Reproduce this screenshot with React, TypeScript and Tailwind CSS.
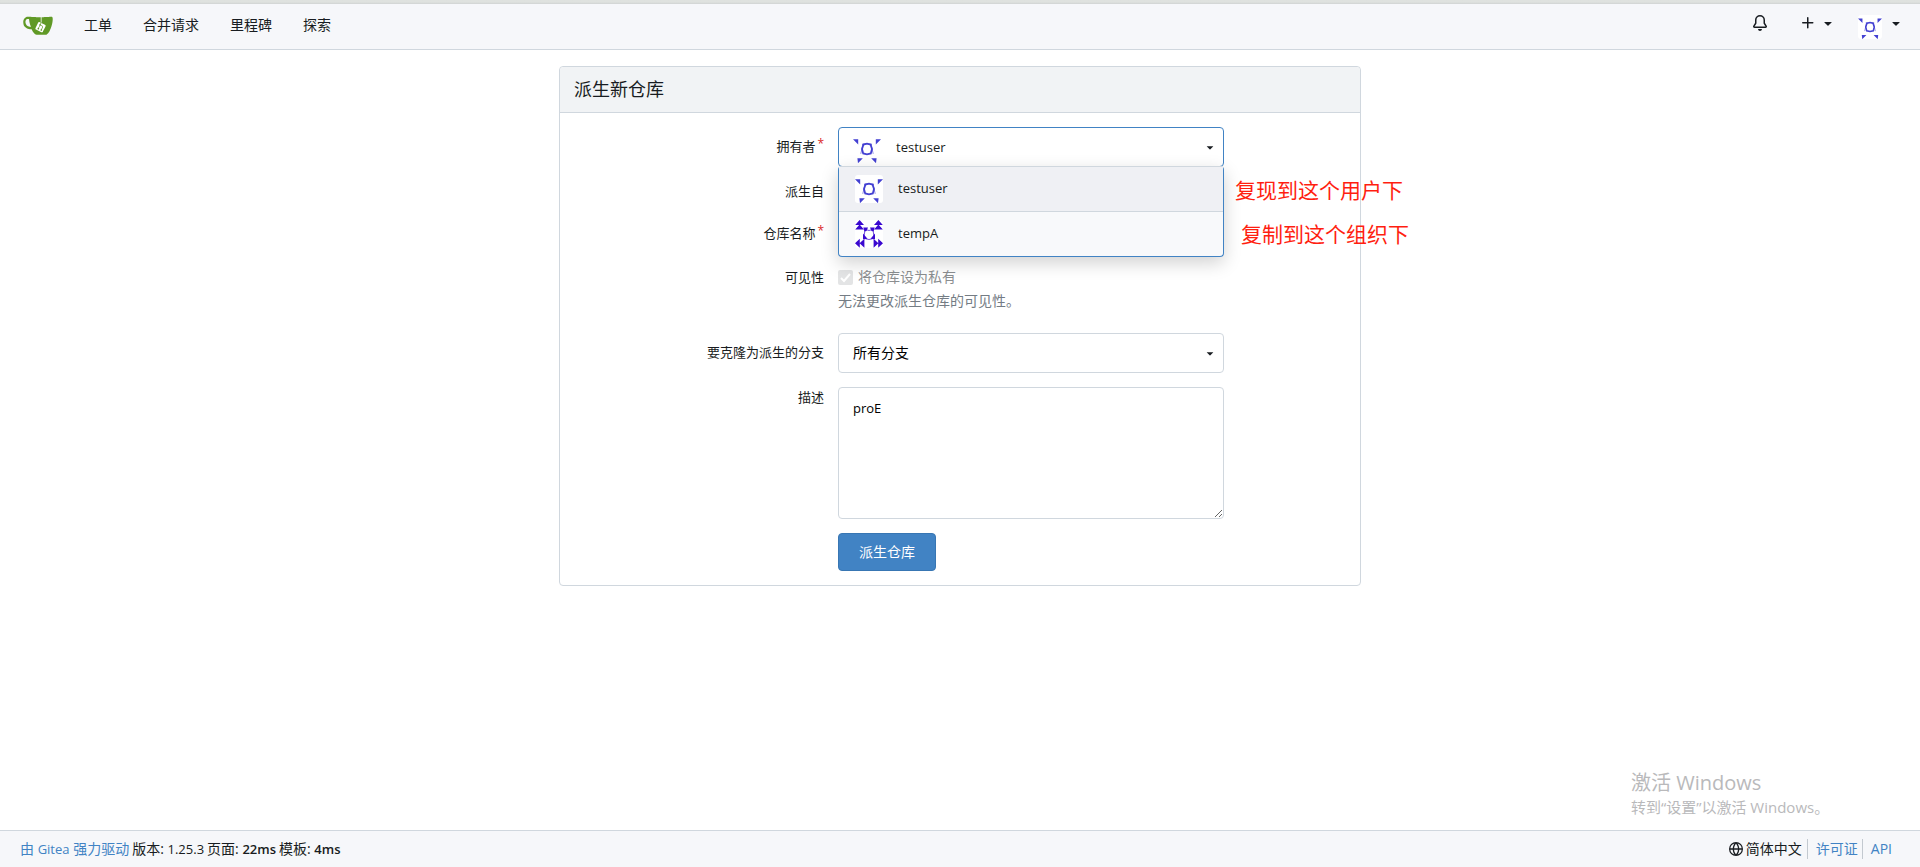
import { useState } from "react";
import type { ReactNode } from "react";

const OCTICONS = {
  bell: "M8 16a2 2 0 0 0 1.985-1.75c.017-.137-.097-.25-.235-.25h-3.5c-.138 0-.252.113-.235.25A2 2 0 0 0 8 16ZM3 5a5 5 0 0 1 10 0v2.947c0 .05.015.098.042.139l1.703 2.555A1.519 1.519 0 0 1 13.482 13H2.518a1.516 1.516 0 0 1-1.263-2.36l1.703-2.554A.255.255 0 0 0 3 7.947Zm5-3.5A3.5 3.5 0 0 0 4.5 5v2.947c0 .346-.102.683-.294.97l-1.703 2.556a.017.017 0 0 0-.003.01l.001.006c0 .002.002.004.004.006l.006.004.007.001h10.964l.007-.001.006-.004.004-.006.001-.007a.017.017 0 0 0-.003-.01l-1.703-2.554a1.745 1.745 0 0 1-.294-.97V5A3.5 3.5 0 0 0 8 1.5Z",
  plus: "M7.75 2a.75.75 0 0 1 .75.75V7h4.25a.75.75 0 0 1 0 1.5H8.5v4.25a.75.75 0 0 1-1.5 0V8.5H2.75a.75.75 0 0 1 0-1.5H7V2.75A.75.75 0 0 1 7.75 2Z",
  globe:
    "M8 0a8 8 0 1 1 0 16A8 8 0 0 1 8 0ZM5.78 8.75a9.64 9.64 0 0 0 1.363 4.177c.255.426.542.832.857 1.215.245-.296.551-.705.857-1.215A9.64 9.64 0 0 0 10.22 8.75Zm4.44-1.5a9.64 9.64 0 0 0-1.363-4.177c-.307-.51-.612-.919-.857-1.215a9.927 9.927 0 0 0-.857 1.215A9.64 9.64 0 0 0 5.78 7.25Zm-5.944 1.5H1.543a6.507 6.507 0 0 0 4.666 5.5c-.123-.181-.24-.365-.352-.552-.715-1.192-1.437-2.874-1.581-4.948Zm-2.733-1.5h2.733c.144-2.074.866-3.756 1.58-4.948.12-.197.237-.381.353-.552a6.507 6.507 0 0 0-4.666 5.5Zm10.181 1.5c-.144 2.074-.866 3.756-1.58 4.948-.12.197-.237.381-.353.552a6.507 6.507 0 0 0 4.666-5.5Zm2.733-1.5a6.507 6.507 0 0 0-4.666-5.5c.123.181.24.365.353.552.714 1.192 1.436 2.874 1.58 4.948Z",
  caret:
    "m4.427 7.427 3.396 3.396a.25.25 0 0 0 .354 0l3.396-3.396A.25.25 0 0 0 11.396 7H4.604a.25.25 0 0 0-.177.427Z",
};

function Octicon({ name, className = "size-4" }: { name: keyof typeof OCTICONS; className?: string }) {
  return (
    <svg viewBox="0 0 16 16" className={`shrink-0 ${className}`} fill="currentColor" aria-hidden="true">
      <path d={OCTICONS[name]} />
    </svg>
  );
}

function GiteaLogo() {
  return (
    <svg viewBox="0 0 640 640" className="size-[30px]" aria-hidden="true">
      <path
        fill="#fff"
        d="M395.9,484.2l-126.9-61c-12.5-6-17.9-21.2-11.8-33.8l61-126.9c6-12.5,21.2-17.9,33.8-11.8c17.2,8.3,27.1,13,27.1,13l-0.1-109.2l16.7-0.1l0.1,117.1c0,0,57.4,24.2,83.1,40.1c3.7,2.3,10.2,6.8,12.9,14.4c2.1,6.1,2,13.1-1,19.3l-61,126.9C423.6,484.9,408.4,490.3,395.9,484.2z"
      />
      <path
        fill="#609926"
        d="M622.7,149.8c-4.1-4.1-9.6-4-9.6-4s-117.2,6.6-177.9,8c-13.3,0.3-26.5,0.6-39.6,0.7c0,39.1,0,78.2,0,117.2c-5.5-2.6-11.1-5.3-16.6-7.9c0-36.4-0.1-109.2-0.1-109.2c-29,0.4-89.2-2.2-89.2-2.2s-141.4-7.1-156.8-8.5c-9.8-0.6-22.5-2.1-39,1.5c-8.7,1.8-33.5,7.4-53.8,26.9C-4.9,212.4,6.6,276.2,8,285.8c1.7,11.7,6.9,44.2,31.7,72.5c45.8,56.1,144.4,54.8,144.4,54.8s12.1,28.9,30.6,55.5c25,33.1,50.7,58.9,75.7,62c63,0,188.9-0.1,188.9-0.1s12,0.1,28.3-10.3c14-8.5,26.5-23.4,26.5-23.4s12.9-13.8,30.9-45.3c5.5-9.7,10.1-19.1,14.1-28c0,0,55.2-117.1,55.2-231.1C633.2,157.9,624.7,151.8,622.7,149.8z M125.6,353.9c-25.9-8.5-36.9-18.7-36.9-18.7S69.6,321.8,60,295.4c-16.5-44.2-1.4-71.2-1.4-71.2s8.4-22.5,38.5-30c13.8-3.7,31-3.1,31-3.1s7.1,59.4,15.7,94.2c7.2,29.2,24.8,77.7,24.8,77.7S142.5,359.9,125.6,353.9z M425.9,461.5c0,0-6.1,14.5-19.6,15.4c-5.8,0.4-10.3-1.2-10.3-1.2s-0.3-0.1-5.3-2.1l-112.9-55c0,0-10.9-5.7-12.8-15.6c-2.2-8.1,2.7-18.1,2.7-18.1L322,273c0,0,4.8-9.7,12.2-13c0.6-0.3,2.3-1,4.5-1.5c8.1-2.1,18,2.8,18,2.8l110.7,53.7c0,0,12.6,5.7,15.3,16.2c1.9,7.4-0.5,14-1.8,17.2C474.6,363.8,425.9,461.5,425.9,461.5z"
      />
      <path
        fill="#609926"
        d="M326.8,380.1c-8.2,0.1-15.4,5.8-17.3,13.8c-1.9,8,2,16.3,9.1,20c7.7,4,17.5,1.8,22.7-5.4c5.1-7.1,4.3-16.9-1.8-23.1l24-49.1c1.5,0.1,3.7,0.2,6.2-0.5c4.1-0.9,7.1-3.6,7.1-3.6c4.2,1.8,8.6,3.8,13.2,6.1c4.8,2.4,9.3,4.9,13.4,7.3c0.9,0.5,1.8,1.1,2.8,1.9c1.6,1.3,3.4,3.1,4.7,5.5c1.9,5.5-1.9,14.9-1.9,14.9c-2.3,7.6-18.4,40.6-18.4,40.6c-8.1-0.2-15.3,5-17.7,12.5c-2.6,8.1,1.1,17.3,8.9,21.3c7.8,4,17.4,1.7,22.5-5.3c5-6.8,4.6-16.3-1.1-22.6c1.9-3.7,3.7-7.4,5.6-11.3c5-10.4,13.5-30.4,13.5-30.4c0.9-1.7,5.7-10.3,2.7-21.3c-2.5-11.4-12.6-16.7-12.6-16.7c-12.2-7.9-29.2-15.2-29.2-15.2s0-4.1-1.1-7.1c-1.1-3.1-2.8-5.1-3.9-6.3c4.7-9.7,9.4-19.3,14.1-29c-4.1-2-8.1-4-12.2-6.1c-4.8,9.8-9.7,19.7-14.5,29.5c-6.7-0.1-12.9,3.5-16.1,9.4c-3.4,6.3-2.7,14.1,1.9,19.8C343.2,346.5,335,363.3,326.8,380.1z"
      />
    </svg>
  );
}

function UserAvatar({ className = "size-7" }: { className?: string }) {
  return (
    <svg viewBox="0 0 28 28" className={`shrink-0 rounded-[3px] bg-white ${className}`} aria-hidden="true">
      <path
        fill="#4340d2"
        d="M0 4.200H5.200V9.400ZM28 4.200H22.800V9.400ZM4.400 23.300H9.800L5 28.200ZM23.600 23.300H18.200L23 28.200Z"
      />
      <g fill="none" stroke="#4340d2">
        <path strokeWidth="1.800" d="M10.500 9.500 14 8.700 17.500 9.500 19 14 17.800 18.500 14 19.300 10.200 18.500 9 14Z" />
        <path strokeWidth="1" opacity=".6" d="M10 9 7.800 18.800M18 9 20.200 18.800M9 9.200H12M16 9.200H19" />
      </g>
    </svg>
  );
}

function OrgAvatar() {
  return (
    <svg viewBox="0 0 28 28" className="size-7 shrink-0 rounded-[3px] bg-white" aria-hidden="true">
      <g fill="#3a08d0">
        <path d="M4.600 0 9 5H.2ZM4.600 4.500 9 9.500H.2ZM23.400 0 27.800 5H19ZM23.400 4.500 27.800 9.500H19Z" />
        <path d="M0 23.300 4.800 18.800V27.800ZM4.600 23.300 9.400 18.800V27.800ZM28 23.300 23.200 18.800V27.800ZM23.400 23.300 18.600 18.800V27.800Z" />
        <path d="M8.300 7.500H13L11.500 11 9.500 11.500ZM19.700 7.500H15L16.500 11 18.500 11.500ZM8 19.300V13.500L12.500 18.800ZM20 19.300V13.500L15.500 18.800Z" />
      </g>
      <path
        fill="none"
        stroke="#3a08d0"
        strokeWidth=".9"
        opacity=".8"
        d="M9 9 14 10.500 19 9M10 9.500 8.800 18.500M18 9.500 19.200 18.500M10.500 18.800 14 19.500 17.500 18.800"
      />
    </svg>
  );
}

function Row({
  label,
  htmlFor,
  required = false,
  top = false,
  children,
}: {
  label: string;
  htmlFor?: string;
  required?: boolean;
  top?: boolean;
  children?: ReactNode;
}) {
  return (
    <div className={`flex gap-3.5 ${top ? "items-start" : "items-center"}`}>
      <label htmlFor={htmlFor} className={`w-[250px] shrink-0 text-right text-[13px] leading-5 ${top ? "" : "pb-[3px]"}`}>
        {label}
        {required && <span className="ml-0.5 align-top text-xs leading-4 text-[#db2828]">*</span>}
      </label>
      <div className="relative w-1/2">{children}</div>
    </div>
  );
}

export default function App() {
  const [owner, setOwner] = useState("testuser");
  const owners = [
    { name: "testuser", avatar: <UserAvatar /> },
    { name: "tempA", avatar: <OrgAvatar /> },
  ];

  return (
    <div className="relative flex min-h-screen flex-col bg-white font-['Open_Sans','Noto_Sans_CJK_SC',sans-serif] text-sm text-[#181c21]">
      <div className="h-1 bg-linear-to-b from-[#dfe2df] from-50% to-[#d0d3d3]" />
      <nav className="flex h-[46px] items-center justify-between border-b border-[#d0d7de] bg-[#f6f7fa] pr-4 pb-1 pl-[23px]">
        <div className="flex items-center gap-[31px]">
          <a href="#" aria-label="Gitea">
            <GiteaLogo />
          </a>
          <a href="#">工单</a>
          <a href="#">合并请求</a>
          <a href="#">里程碑</a>
          <a href="#">探索</a>
        </div>
        <div className="flex items-center pb-1">
          <button type="button" aria-label="通知" className="mr-8">
            <Octicon name="bell" />
          </button>
          <button type="button" aria-label="新建" className="mr-[22px] flex items-center gap-1">
            <Octicon name="plus" />
            <Octicon name="caret" />
          </button>
          <button type="button" aria-label="用户菜单" className="flex items-center gap-1.5">
            <UserAvatar className="mt-2 size-6" />
            <Octicon name="caret" />
          </button>
        </div>
      </nav>

      <main className="grow px-4 pt-4">
        <form className="mx-auto max-w-[802px] rounded border border-[#d0d7de]" onSubmit={(e) => e.preventDefault()}>
          <h3 className="rounded-t border-b border-[#d0d7de] bg-[#f1f3f5] px-3.5 py-2 text-lg leading-[29px]">
            派生新仓库
          </h3>
          <div className="flex flex-col gap-3.5 p-3.5">
            <Row label="拥有者" htmlFor="owner" required>
              <button
                id="owner"
                type="button"
                aria-haspopup="listbox"
                aria-expanded="true"
                className="flex h-10 w-full items-center gap-[15px] rounded border border-[#4183c4] bg-white pr-1.5 pl-3.5"
              >
                <UserAvatar className="mt-1 size-7" />
                <span className="grow text-left text-[13px]">{owner}</span>
                <Octicon name="caret" className="size-3.5" />
              </button>
              <ul
                role="listbox"
                aria-label="拥有者"
                className="absolute inset-x-0 top-[39px] z-10 rounded border border-[#4183c4] border-t-[#d0d7de] bg-[#f8f9fb] shadow-[0_6px_18px_#0000002e]"
              >
                {owners.map((item) => (
                  <li
                    key={item.name}
                    role="option"
                    aria-selected={item.name === owner}
                    onClick={() => setOwner(item.name)}
                    className="flex h-[45px] cursor-pointer items-center gap-[15px] border-b border-[#d0d7de] px-4 last:h-11 last:border-b-0 aria-selected:bg-[#eff0f4]"
                  >
                    {item.avatar}
                    <span className="pb-0.5 text-[13px]">{item.name}</span>
                  </li>
                ))}
              </ul>
              <p className="absolute top-12 left-[397px] z-20 text-[21px] leading-[30px] whitespace-nowrap text-[#ff1e10]">
                复现到这个用户下
              </p>
              <p className="absolute top-[92px] left-[403px] z-20 text-[21px] leading-[30px] whitespace-nowrap text-[#ff1e10]">
                复制到这个组织下
              </p>
            </Row>
            <Row label="派生自" top>
              <div className="h-[18px]" />
            </Row>
            <Row label="仓库名称" htmlFor="repo-name" required>
              <input
                id="repo-name"
                type="text"
                className="block h-[38px] w-full rounded border border-[#d0d7de] px-3.5"
              />
            </Row>
            <Row label="可见性" top>
              <div className="flex h-[52px] flex-col gap-1">
                <label className="flex items-center gap-[5px] leading-5 text-[#8b8e90]">
                  <span className="relative flex size-[15px]">
                    <input
                      type="checkbox"
                      defaultChecked
                      disabled
                      className="size-[15px] appearance-none rounded-[2px] bg-[#e3e4e5]"
                    />
                    <svg
                      viewBox="0 0 15 15"
                      className="absolute inset-0 size-[15px]"
                      fill="none"
                      stroke="#fff"
                      strokeWidth="2"
                      aria-hidden="true"
                    >
                      <path d="M3 8 6 11 12 4" />
                    </svg>
                  </span>
                  将仓库设为私有
                </label>
                <span className="leading-5 text-[#747c84]">无法更改派生仓库的可见性。</span>
              </div>
            </Row>
            <Row label="要克隆为派生的分支" htmlFor="branch">
              <select
                id="branch"
                className="block h-10 w-full appearance-none rounded border border-[#d0d7de] bg-white px-3.5 text-black"
              >
                <option>所有分支</option>
              </select>
              <span className="pointer-events-none absolute inset-y-0 right-[7px] flex items-center">
                <Octicon name="caret" className="size-3.5" />
              </span>
            </Row>
            <Row label="描述" htmlFor="description" top>
              <textarea
                id="description"
                defaultValue="proE"
                className="block h-[132px] w-full resize rounded border border-[#d0d7de] px-3.5 py-2.5 text-[13px] leading-5 text-black"
              />
            </Row>
            <Row label="">
              <button
                type="submit"
                className="block h-[38px] rounded border border-[#3876b3] bg-[#4183c4] px-5 text-white"
              >
                派生仓库
              </button>
            </Row>
          </div>
        </form>
      </main>

      <aside className="pointer-events-none absolute right-[91px] bottom-[50px] w-[198px] whitespace-nowrap text-[#b9b9bb]">
        <p className="text-xl leading-7">激活 Windows</p>
        <p className="text-[15px] leading-5">转到“设置”以激活 Windows。</p>
      </aside>

      <footer className="flex h-[37px] items-center justify-between border-t border-[#d0d7de] bg-[#f6f7fa] pr-7 pl-5">
        <div className="flex gap-[3px] leading-5">
          <a href="#" className="text-[#4183c4]">
            由 <span className="text-[13px]">Gitea</span> 强力驱动
          </a>
          <span>
            版本: <span className="text-[13px]">1.25.3</span>
          </span>
          <span>
            页面: <strong className="text-[13px] font-semibold">22ms</strong>
          </span>
          <span>
            模板: <strong className="text-[13px] font-semibold">4ms</strong>
          </span>
        </div>
        <div className="flex items-center leading-5">
          <button type="button" className="flex items-center gap-[3px] pr-[5px]">
            <Octicon name="globe" className="size-3.5" />
            简体中文
          </button>
          <a href="#" className="border-l border-[#c3c9d0] pr-1 pl-2 text-[#4183c4]">
            许可证
          </a>
          <a href="#" className="border-l border-[#c3c9d0] pl-2 text-[#4183c4]">
            API
          </a>
        </div>
      </footer>
    </div>
  );
}
